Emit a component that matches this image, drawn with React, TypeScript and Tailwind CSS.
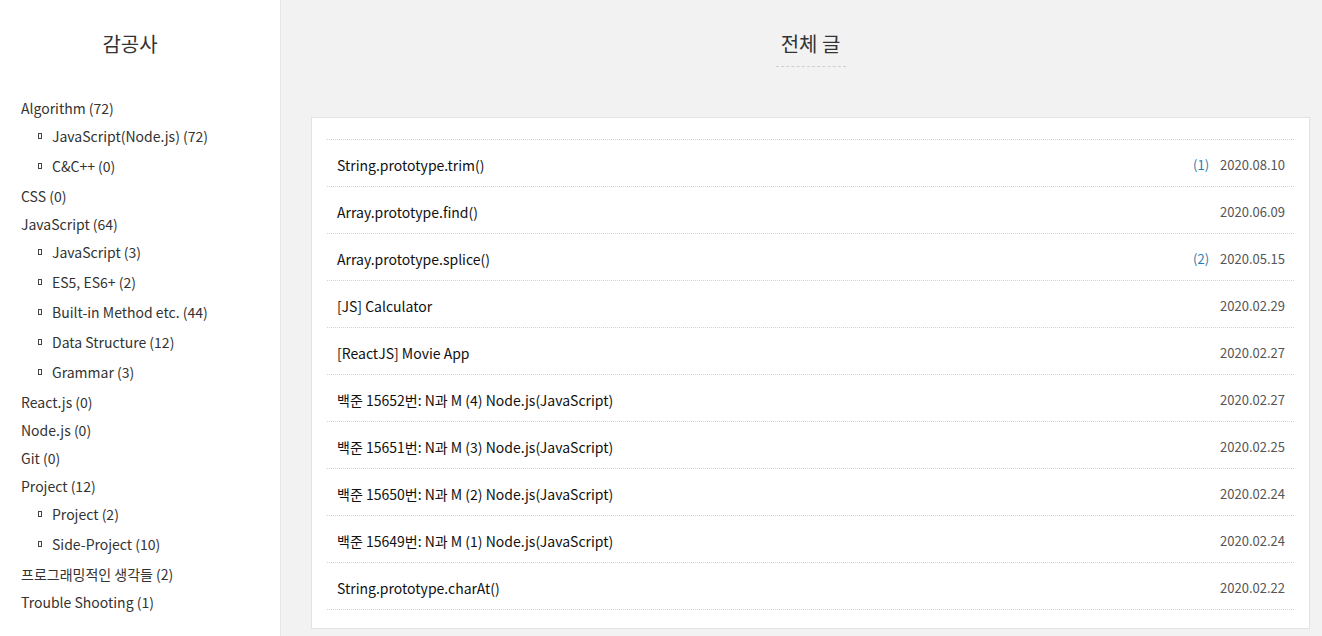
import React from "react";

type Cat = { name: string; sub?: string[] };

const categories: Cat[] = [
  { name: "Algorithm (72)", sub: ["JavaScript(Node.js) (72)", "C&C++ (0)"] },
  { name: "CSS (0)" },
  {
    name: "JavaScript (64)",
    sub: ["JavaScript (3)", "ES5, ES6+ (2)", "Built-in Method etc. (44)", "Data Structure (12)", "Grammar (3)"],
  },
  { name: "React.js (0)" },
  { name: "Node.js (0)" },
  { name: "Git (0)" },
  { name: "Project (12)", sub: ["Project (2)", "Side-Project (10)"] },
  { name: "프로그래밍적인 생각들 (2)" },
  { name: "Trouble Shooting (1)" },
];

const posts = [
  { title: "String.prototype.trim()", count: "(1)", date: "2020.08.10" },
  { title: "Array.prototype.find()", date: "2020.06.09" },
  { title: "Array.prototype.splice()", count: "(2)", date: "2020.05.15" },
  { title: "[JS] Calculator", date: "2020.02.29" },
  { title: "[ReactJS] Movie App", date: "2020.02.27" },
  { title: "백준 15652번: N과 M (4) Node.js(JavaScript)", date: "2020.02.27" },
  { title: "백준 15651번: N과 M (3) Node.js(JavaScript)", date: "2020.02.25" },
  { title: "백준 15650번: N과 M (2) Node.js(JavaScript)", date: "2020.02.24" },
  { title: "백준 15649번: N과 M (1) Node.js(JavaScript)", date: "2020.02.24" },
  { title: "String.prototype.charAt()", date: "2020.02.22" },
];

function Sidebar() {
  return (
    <aside className="w-[281px] shrink-0 bg-white border-r border-[#e6e6e6] min-h-[636px]">
      <h1 className="w-[260px] pt-[30px] text-center text-[20px] leading-[28px] text-[#333]">감공사</h1>
      <ul className="mt-[36px] pl-[21px] text-[14px] text-[#333]">
        {categories.map((c) => (
          <li key={c.name}>
            <div className="leading-[28px]">{c.name}</div>
            {c.sub && (
              <ul>
                {c.sub.map((s) => (
                  <li key={s} className="flex items-center h-[30px] pb-[2px] pl-[17px]">
                    <span className="w-[4px] h-[6px] border border-[#444] mr-[10px]" />
                    {s}
                  </li>
                ))}
              </ul>
            )}
          </li>
        ))}
      </ul>
    </aside>
  );
}

export default function App() {
  return (
    <div
      className="flex min-h-[636px] bg-[#f2f2f2]"
      style={{ fontFamily: '"Noto Sans CJK KR", "Noto Sans", sans-serif' }}
    >
      <Sidebar />
      <main className="flex-1 pl-[30px] pr-[12px]">
        <div className="pt-[30px] flex flex-col items-center">
          <h2 className="text-[20px] leading-[28px] text-[#333]">전체 글</h2>
          <div className="mt-[8px] w-[70px] border-b border-dashed border-[#cfcfcf]" />
        </div>
        <section className="mt-[50px] bg-white border border-[#e3e3e3] px-[15px] pt-[21px] pb-[18px]">
          <ul className="border-t border-dotted border-[#d4d4d4]">
            {posts.map((p) => (
              <li
                key={p.title + p.date}
                className="flex items-center h-[47px] pt-[4px] pl-[10px] pr-[9px] border-b border-dotted border-[#d4d4d4]"
              >
                <span className="flex-1 text-[14px] text-[#111]">{p.title}</span>
                {p.count && <span className="text-[13px] text-[#2a7bb0] mr-[11px]">{p.count}</span>}
                <span className="text-[13px] text-[#555]">{p.date}</span>
              </li>
            ))}
          </ul>
        </section>
      </main>
    </div>
  );
}
